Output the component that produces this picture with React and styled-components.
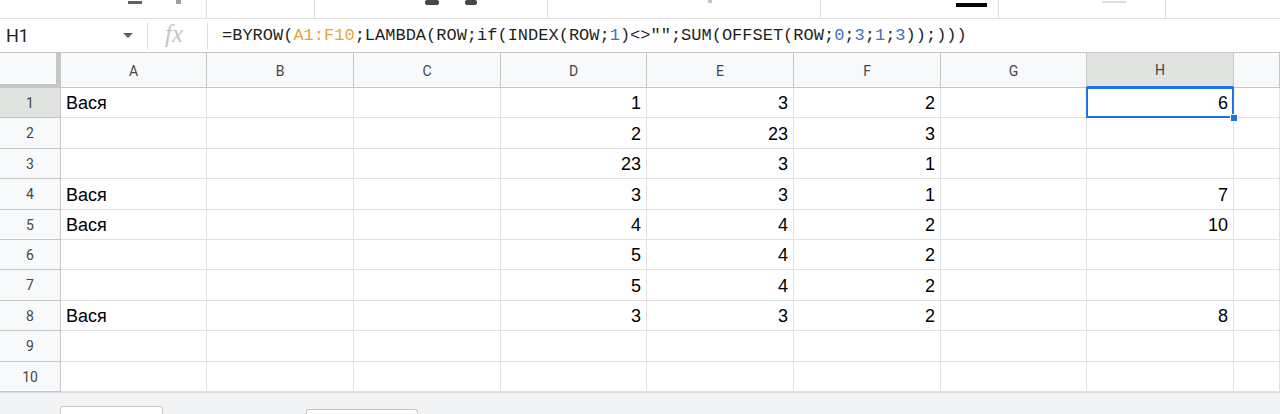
import React from "react";
import styled, { createGlobalStyle } from "styled-components";

const Global = createGlobalStyle`
  html, body { margin: 0; padding: 0; background: #ffffff; }
  body { width: 1280px; height: 414px; overflow: hidden; }
  * { box-sizing: border-box; }
`;

const Page = styled.div`
  width: 1280px;
  height: 414px;
  display: flex;
  flex-direction: column;
  background: #f1f3f4;
  overflow: hidden;
`;

const TopStrip = styled.div`
  height: 19px;
  flex: none;
  background: #fff;
  border-bottom: 1px solid #e0e0e0;
  display: flex;
  align-items: flex-start;
`;

const Slot = styled.div`
  width: ${(p) => p.$w}px;
  height: 18px;
  flex: none;
  display: flex;
  align-items: flex-start;
  justify-content: ${(p) => p.$justify || "flex-start"};
  padding-left: ${(p) => p.$pl || 0}px;
  gap: ${(p) => p.$gap || 0}px;
  border-right: ${(p) => (p.$sep ? "1px solid #dadce0" : "none")};
`;

const Stub = styled.div`
  width: ${(p) => p.$w}px;
  height: ${(p) => p.$h}px;
  margin-top: ${(p) => p.$t || 0}px;
  background: ${(p) => p.$c};
  border-radius: ${(p) => p.$r || 0}px;
  flex: none;
`;

const FormulaBar = styled.div`
  height: 34px;
  flex: none;
  background: #fff;
  border-bottom: 1px solid #c7c7c7;
  display: flex;
  align-items: center;
`;

const NameBox = styled.div`
  width: 147px;
  height: 100%;
  display: flex;
  align-items: center;
  justify-content: space-between;
  padding: 0 14px 0 6px;
  font-family: Roboto, "Liberation Sans", sans-serif;
  font-size: 18px;
  color: #1f1f1f;
  flex: none;
`;

const Divider = styled.div`
  width: 1px;
  height: 26px;
  background: #dadce0;
  flex: none;
`;

const FxBox = styled.div`
  width: 59px;
  height: 100%;
  display: flex;
  align-items: center;
  padding-left: 17px;
  font-family: "Liberation Serif", "DejaVu Serif", serif;
  font-style: italic;
  font-size: 25px;
  color: #c4c7c5;
  flex: none;
  padding-bottom: 3px;
`;

const Formula = styled.div`
  padding-left: 14px;
  font-family: "Liberation Mono", "DejaVu Sans Mono", monospace;
  font-size: 17px;
  color: #1f1f1f;
  white-space: pre;
`;

const Tok = styled.span`
  color: ${(p) => (p.$kind === "range" ? "#e8a33c" : p.$kind === "num" ? "#3b72c4" : "inherit")};
`;

const Grid = styled.div`
  display: grid;
  grid-template-columns: 61px 146px 147px 147px 146px 147px 147px 146px 147px 46px;
  grid-template-rows: 35px 30px 31px 30px 31px 30px 30px 31px 30px 31px 30px;
  background: #fff;
  flex: none;
`;

const Corner = styled.div`
  background: #f8f9fa;
  border-right: 5px solid #c4c7c5;
  border-bottom: 4px solid #c4c7c5;
`;

const ColHead = styled.div`
  display: flex;
  align-items: center;
  justify-content: center;
  font-family: Roboto, "Liberation Sans", sans-serif;
  font-size: 14px;
  color: #444746;
  background: ${(p) => (p.$active ? "#e1e3e1" : "#f8f9fa")};
  border-right: 1px solid #c4c7c5;
  border-bottom: ${(p) => (p.$active ? "2px solid #1a73e8" : "1px solid #c4c7c5")};
  padding-top: 1px;
`;

const RowHead = styled.div`
  display: flex;
  align-items: center;
  justify-content: center;
  font-family: Roboto, "Liberation Sans", sans-serif;
  font-size: 14px;
  color: #444746;
  background: ${(p) => (p.$active ? "#e1e3e1" : "#f8f9fa")};
  border-right: 1px solid #c4c7c5;
  border-bottom: 1px solid #c4c7c5;
`;

const Cell = styled.div`
  position: relative;
  display: flex;
  align-items: center;
  justify-content: ${(p) => (p.$num ? "flex-end" : "flex-start")};
  padding: 2px 5px 0 5px;
  font-family: "Liberation Sans", Arial, sans-serif;
  font-size: 18px;
  color: #000;
  border-right: 1px solid #e1e1e1;
  border-bottom: 1px solid #e1e1e1;
  white-space: nowrap;
  overflow: visible;
`;

const Selection = styled.div`
  position: absolute;
  left: -1px;
  top: -1px;
  right: -1px;
  bottom: -1px;
  border: 2px solid #1a73e8;
  pointer-events: none;
`;

const Handle = styled.div`
  position: absolute;
  right: -5px;
  bottom: -5px;
  width: 8px;
  height: 8px;
  background: #1a73e8;
  border: 1px solid #fff;
  z-index: 2;
`;

const Bottom = styled.div`
  flex: 1;
  background: #f1f3f4;
  border-top: 1px solid #dadce0;
  display: flex;
  align-items: flex-end;
  padding-left: 60px;
`;

const Tab = styled.div`
  width: ${(p) => p.$w}px;
  height: ${(p) => p.$h}px;
  margin-left: ${(p) => p.$ml}px;
  background: #fff;
  border: 1px solid #c7c7c7;
  border-bottom: none;
  border-radius: 3px 3px 0 0;
  flex: none;
`;

const cols = ["A", "B", "C", "D", "E", "F", "G", "H", ""];

const data = [
  ["Вася", "", "", 1, 3, 2, "", 6],
  ["", "", "", 2, 23, 3, "", ""],
  ["", "", "", 23, 3, 1, "", ""],
  ["Вася", "", "", 3, 3, 1, "", 7],
  ["Вася", "", "", 4, 4, 2, "", 10],
  ["", "", "", 5, 4, 2, "", ""],
  ["", "", "", 5, 4, 2, "", ""],
  ["Вася", "", "", 3, 3, 2, "", 8],
  ["", "", "", "", "", "", "", ""],
  ["", "", "", "", "", "", "", ""],
];

const tokens = [
  ["=BYROW(", ""],
  ["A1:F10", "range"],
  [";LAMBDA(ROW;if(INDEX(ROW;", ""],
  ["1", "num"],
  [')<>"";SUM(OFFSET(ROW;', ""],
  ["0", "num"],
  [";", ""],
  ["3", "num"],
  [";", ""],
  ["1", "num"],
  [";", ""],
  ["3", "num"],
  ["));)))", ""],
];

const Caret = () => (
  <svg width="10" height="5" viewBox="0 0 10 5">
    <path d="M0 0 L10 0 L5 5 Z" fill="#5f6368" />
  </svg>
);

export default function App() {
  return (
    <Page>
      <Global />
      <TopStrip>
        <Slot $w={207} $sep $pl={128} $gap={34}>
          <Stub $w={14} $h={3} $t={1} $c="#5f6368" />
          <Stub $w={5} $h={4} $t={0} $c="#9aa0a6" />
        </Slot>
        <Slot $w={108} $sep />
        <Slot $w={233} $sep $pl={110} $gap={26}>
          <Stub $w={14} $h={5} $t={0} $c="#444746" $r={2} />
          <Stub $w={12} $h={5} $t={0} $c="#444746" $r={2} />
        </Slot>
        <Slot $w={273} $sep $pl={160}>
          <Stub $w={4} $h={3} $t={0} $c="#c4c7c5" />
        </Slot>
        <Slot $w={178} $sep $pl={135}>
          <Stub $w={31} $h={4} $t={3} $c="#000" />
        </Slot>
        <Slot $w={167} $sep $pl={103}>
          <Stub $w={24} $h={2} $t={1} $c="#dadce0" />
        </Slot>
        <Slot $w={114} />
      </TopStrip>
      <FormulaBar>
        <NameBox>
          <span>H1</span>
          <Caret />
        </NameBox>
        <Divider />
        <FxBox>fx</FxBox>
        <Divider />
        <Formula>
          {tokens.map(([t, k], i) => (
            <Tok key={i} $kind={k}>
              {t}
            </Tok>
          ))}
        </Formula>
      </FormulaBar>
      <Grid>
        <Corner />
        {cols.map((c, i) => (
          <ColHead key={i} $active={c === "H"}>
            {c}
          </ColHead>
        ))}
        {data.map((row, r) => (
          <React.Fragment key={r}>
            <RowHead $active={r === 0}>{r + 1}</RowHead>
            {row.map((v, c) => (
              <Cell key={c} $num={typeof v === "number"}>
                {v}
                {r === 0 && c === 7 && (
                  <>
                    <Selection />
                    <Handle />
                  </>
                )}
              </Cell>
            ))}
            <Cell />
          </React.Fragment>
        ))}
      </Grid>
      <Bottom>
        <Tab $w={103} $h={8} $ml={0} />
        <Tab $w={112} $h={5} $ml={143} />
      </Bottom>
    </Page>
  );
}
